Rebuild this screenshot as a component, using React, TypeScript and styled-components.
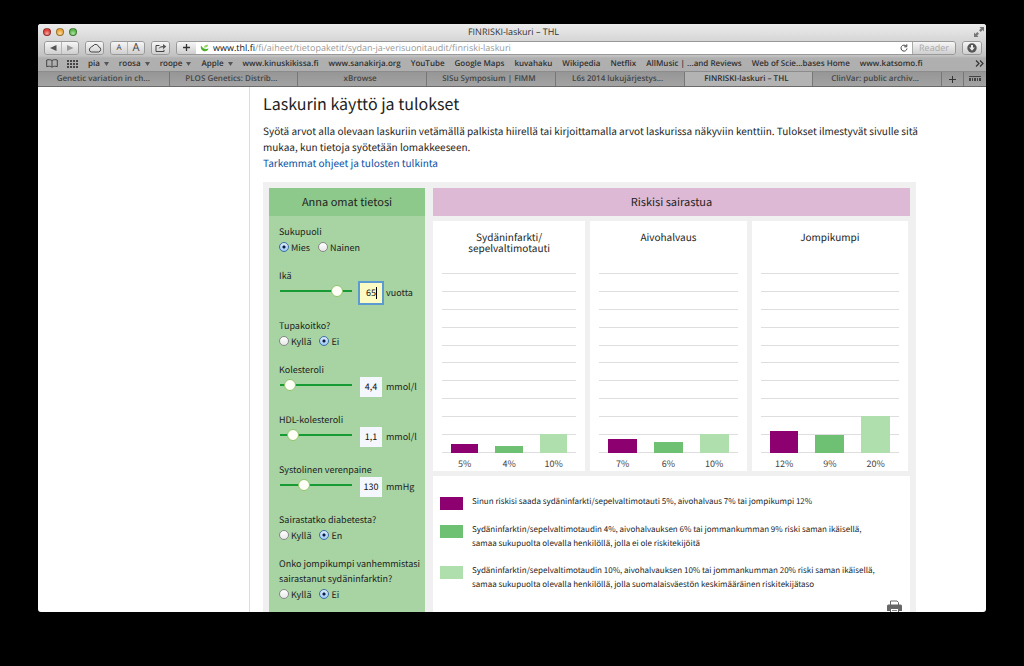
import React, { useState } from "react";
import styled, { createGlobalStyle, css } from "styled-components";

const SITE_FONT = `"Noto Sans CJK SC", "Noto Sans", sans-serif`;
const CHROME_FONT = `"Open Sans", "Noto Sans", sans-serif`;

const GlobalStyle = createGlobalStyle`
  *, *::before, *::after { box-sizing: border-box; }
  html, body { margin: 0; background: #000; text-rendering: geometricPrecision; }
  button, input { font: inherit; color: inherit; margin: 0; text-rendering: inherit; }
`;

const Desktop = styled.div`
  height: 100vh;
  padding: 24px 38px 54px;
  display: flex;
  background: #000;
`;

const Window = styled.div`
  flex: 1;
  min-width: 0;
  display: flex;
  flex-direction: column;
  background: #fff;
  border-radius: 3px;
  overflow: hidden;
`;

/* Browser chrome */

const Chrome = styled.header`
  font-family: ${CHROME_FONT};
  color: #333;
  background: linear-gradient(#ececec, #c2c2c2 32px, #b0b0b0 34px, #adadad);
`;

const TitleBar = styled.div`
  display: grid;
  grid-template-columns: 60px 1fr 60px;
  align-items: center;
  height: 15px;
  padding: 0 2px 0 5px;
`;

const Lights = styled.div`
  display: flex;
  gap: 5px;
`;

const Light = styled.button<{ $color: string }>`
  width: 8px;
  height: 8px;
  padding: 0;
  border: 1px solid rgba(0, 0, 0, 0.35);
  border-radius: 50%;
  background: radial-gradient(circle at 50% 75%, #fff8, transparent 60%), ${(p) => p.$color};
`;

const WindowTitle = styled.div`
  font-size: 9px;
  line-height: 15px;
  text-align: center;
`;

const Expand = styled.svg`
  justify-self: end;
`;

const Toolbar = styled.div`
  display: flex;
  align-items: center;
  gap: 6px;
  height: 17px;
  padding: 0 4px 0 6px;
`;

const ButtonGroup = styled.div`
  display: flex;
  height: 14px;
  border: 1px solid #999;
  border-radius: 3px;
  overflow: hidden;
`;

const ToolButton = styled.button<{ $width?: number; $size?: number }>`
  display: flex;
  align-items: center;
  justify-content: center;
  width: ${(p) => p.$width ?? 17}px;
  padding: 0;
  border: 0;
  background: linear-gradient(#f6f6f6, #cfcfcf);
  font-size: ${(p) => p.$size ?? 9}px;
  line-height: 12px;
  color: #444;
  & + & { border-left: 1px solid #b5b5b5; }
`;

const AddressGroup = styled(ButtonGroup)`
  flex: 1;
  min-width: 0;
`;

const Address = styled.div`
  flex: 1;
  min-width: 0;
  display: flex;
  align-items: center;
  gap: 4px;
  padding: 0 4px;
  background: #fff;
  font-size: 9px;
  line-height: 12px;
  color: #999;
  white-space: nowrap;
  b { font-weight: 400; color: #111; }
`;

const UrlText = styled.span`
  flex: 1;
`;

const ReaderButton = styled(ToolButton)`
  color: #aaa;
  border-left: 1px solid #aaa;
`;

const Bookmarks = styled.nav`
  display: flex;
  align-items: center;
  gap: 10px;
  height: 15px;
  padding: 0 2px 0 8px;
  white-space: nowrap;
`;

const IconPair = styled.div`
  display: flex;
  align-items: center;
  gap: 9px;
`;

const Bookmark = styled.a`
  display: flex;
  align-items: center;
  gap: 4px;
  color: #2f2f2f;
  font-size: 8px;
  line-height: 15px;
  font-weight: 600;
  text-decoration: none;
`;

const More = styled.button`
  display: flex;
  margin-left: auto;
  padding: 0;
  border: 0;
  background: none;
`;

const Tabs = styled.div`
  display: flex;
  height: 16px;
  border-top: 1px solid #8c8c8c;
  border-bottom: 1px solid #6a6a6a;
`;

const tabFace = css<{ $active?: boolean }>`
  padding: 0;
  border: 0;
  border-right: 1px solid #777;
  background: ${(p) => (p.$active ? "#b3b3b3" : "linear-gradient(#969696, #a3a3a3)")};
`;

const Tab = styled.button<{ $active?: boolean }>`
  ${tabFace}
  flex: 128;
  min-width: 0;
  padding-right: 4px;
  font-size: 8px;
  line-height: 14px;
  font-weight: 600;
  color: ${(p) => (p.$active ? "#2d2d2d" : "#444")};
  white-space: nowrap;
  overflow: hidden;
  &:first-child { flex-grow: 135; padding-right: 0; }
`;

const TabTool = styled.button<{ $active?: boolean }>`
  ${tabFace}
  display: flex;
  align-items: center;
  justify-content: center;
  width: 22px;
  &:last-child { border-right: 0; }
`;

/* Page */

const Page = styled.div`
  flex: 1;
  min-height: 0;
  display: grid;
  grid-template-columns: 212px 1fr;
  overflow: hidden;
  font-family: ${SITE_FONT};
  color: #222;
`;

const Sidebar = styled.aside`
  border-right: 1px solid #ddd;
`;

const Main = styled.main`
  min-width: 0;
  padding: 3px 58px 0 13px;
`;

const Heading = styled.h1`
  margin: 0 0 7px;
  font-size: 16px;
  line-height: 26px;
  font-weight: 400;
`;

const Intro = styled.p`
  margin: 0 0 11px;
  font-size: 10px;
  line-height: 16px;
  a { color: #0b4ea2; text-decoration: none; }
`;

const Calculator = styled.section`
  display: grid;
  grid-template-columns: 156px 1fr;
  gap: 8px;
  margin-right: 12px;
  padding: 6px;
  background: #f1f0f1;
`;

const PanelTitle = styled.h2<{ $color: string }>`
  margin: 0;
  background: ${(p) => p.$color};
  font-size: 11px;
  line-height: 28px;
  font-weight: 400;
  text-align: center;
`;

const Form = styled.form`
  background: #a7d4a2;
  font-size: 9px;
  line-height: 15px;
`;

const Fields = styled.div`
  display: flex;
  flex-direction: column;
  gap: 13px;
  padding: 8px 0 24px 10px;
`;

const Group = styled.fieldset`
  margin: 0;
  padding: 0;
  border: 0;
`;

const Legend = styled.legend`
  padding: 0;
  white-space: nowrap;
`;

const FieldLabel = styled.label`
  display: block;
`;

const Options = styled.div`
  display: flex;
  gap: 8px;
  height: 16px;
`;

const Option = styled.label`
  display: flex;
  align-items: center;
  gap: 2px;
`;

const Radio = styled.input.attrs({ type: "radio" })`
  appearance: none;
  width: 10px;
  height: 10px;
  border: 1px solid #888;
  border-radius: 50%;
  background: linear-gradient(#fff, #e8e8e8);
  &:checked {
    border-color: #3f6ea8;
    background: radial-gradient(circle, #0c1c40 0 1px, transparent 2px), linear-gradient(#dcebfb, #9cc8f3);
  }
`;

const SliderRow = styled.div`
  display: flex;
  align-items: flex-start;
  height: 22px;
  padding-left: 1px;
`;

const Slider = styled.input.attrs({ type: "range" })`
  appearance: none;
  width: 72px;
  height: 16px;
  margin-right: 8px;
  background: linear-gradient(#169b35, #169b35) center / 100% 2px no-repeat;
  &::-webkit-slider-thumb {
    appearance: none;
    width: 12px;
    height: 12px;
    border: 1px solid #8fc46a;
    border-radius: 50%;
    background: #fffff8;
  }
`;

const ValueWrap = styled.div`
  position: relative;
  margin-right: 4px;
`;

const ValueBox = styled.input<{ $focused?: boolean }>`
  display: block;
  width: 22px;
  height: 20px;
  padding: 0;
  border: 0;
  outline: 0;
  background: #f4f7fd;
  color: #111;
  line-height: 20px;
  text-align: center;
  ${(p) =>
    p.$focused &&
    css`
      background: #fdfbc4;
      box-shadow: 0 0 0 2px #5c9bd0;
    `}
`;

const Caret = styled.span`
  position: absolute;
  top: 4px;
  right: 5px;
  width: 1px;
  height: 12px;
  background: #000;
`;

const Unit = styled.span`
  line-height: 20px;
`;

const Results = styled.div`
  display: flex;
  flex-direction: column;
  gap: 5px;
  min-width: 0;
`;

const Cards = styled.div`
  display: grid;
  grid-template-columns: 152fr 156fr 156fr;
  gap: 5px;
  padding-right: 2px;
`;

const Card = styled.figure`
  margin: 0;
  padding: 10px 9px 0;
  background: #fff;
`;

const CardTitle = styled.figcaption`
  height: 42px;
  font-size: 10px;
  line-height: 11px;
  text-align: center;
  white-space: pre-line;
`;

const Plot = styled.div`
  display: grid;
  height: 180px;
  & > * { grid-area: 1 / 1; }
`;

const Rules = styled.div`
  display: flex;
  flex-direction: column;
  justify-content: space-between;
`;

const Rule = styled.i`
  height: 1px;
  background: #dedede;
`;

const Bars = styled.div`
  display: grid;
  grid-template-columns: repeat(3, 1fr);
  column-gap: 17px;
  align-items: end;
  padding: 0 9px;
`;

const Bar = styled.div<{ $color: string }>`
  background: ${(p) => p.$color};
`;

const Percents = styled(Bars)`
  padding-top: 4px;
  padding-bottom: 1px;
  font-size: 9px;
  line-height: 13px;
  text-align: center;
  color: #444;
`;

const Explain = styled.div`
  flex: 1;
  display: flex;
  flex-direction: column;
  padding: 19px 8px 20px 7px;
  background: #fff;
`;

const ExplainList = styled.ul`
  display: flex;
  flex-direction: column;
  gap: 13px;
  margin: 0;
  padding: 0;
  list-style: none;
  font-size: 8px;
  line-height: 14px;
  white-space: nowrap;
`;

const ExplainItem = styled.li`
  display: flex;
  align-items: flex-start;
  gap: 9px;
`;

const Swatch = styled.span<{ $color: string }>`
  flex: none;
  width: 23px;
  height: 13px;
  margin-top: 2px;
  background: ${(p) => p.$color};
`;

const PrintButton = styled.button`
  align-self: flex-end;
  display: flex;
  margin-top: 8px;
  padding: 0;
  border: 0;
  background: none;
`;

const COLORS = ["#8d0070", "#6ec072", "#b0dfae"];

const BOOKMARKS: { name: string; menu?: boolean }[] = [
  { name: "pia", menu: true },
  { name: "roosa", menu: true },
  { name: "roope", menu: true },
  { name: "Apple", menu: true },
  { name: "www.kinuskikissa.fi" },
  { name: "www.sanakirja.org" },
  { name: "YouTube" },
  { name: "Google Maps" },
  { name: "kuvahaku" },
  { name: "Wikipedia" },
  { name: "Netflix" },
  { name: "AllMusic | ...and Reviews" },
  { name: "Web of Scie...bases Home" },
  { name: "www.katsomo.fi" },
];

const TABS = [
  "Genetic variation in ch...",
  "PLOS Genetics: Distrib...",
  "xBrowse",
  "SISu Symposium | FIMM",
  "L6s 2014 lukujärjestys...",
  "FINRISKI-laskuri – THL",
  "ClinVar: public archiv...",
];

const CHARTS = [
  { title: "Sydäninfarkti/\nsepelvaltimotauti", values: [5, 4, 10], heights: [9, 7, 19] },
  { title: "Aivohalvaus", values: [7, 6, 10], heights: [14, 11, 19] },
  { title: "Jompikumpi", values: [12, 9, 20], heights: [22, 18, 37] },
];

const EXPLANATIONS = [
  ["Sinun riskisi saada sydäninfarkti/sepelvaltimotauti 5%, aivohalvaus 7% tai jompikumpi 12%"],
  [
    "Sydäninfarktin/sepelvaltimotaudin 4%, aivohalvauksen 6% tai jommankumman 9% riski saman ikäisellä,",
    "samaa sukupuolta olevalla henkilöllä, jolla ei ole riskitekijöitä",
  ],
  [
    "Sydäninfarktin/sepelvaltimotaudin 10%, aivohalvauksen 10% tai jommankumman 20% riski saman ikäisellä,",
    "samaa sukupuolta olevalla henkilöllä, jolla suomalaisväestön keskimääräinen riskitekijätaso",
  ],
];

function RadioGroup({ name, label, options, initial }: { name: string; label: React.ReactNode; options: string[]; initial: string }) {
  const [value, setValue] = useState(initial);
  return (
    <Group>
      <Legend>{label}</Legend>
      <Options>
        {options.map((o) => (
          <Option key={o}>
            <Radio name={name} checked={value === o} onChange={() => setValue(o)} />
            {o}
          </Option>
        ))}
      </Options>
    </Group>
  );
}

interface SliderFieldProps {
  id: string;
  label: string;
  unit: string;
  min: number;
  max: number;
  step: number;
  initial: string;
  focused?: boolean;
}

function SliderField({ id, label, unit, min, max, step, initial, focused }: SliderFieldProps) {
  const [value, setValue] = useState(initial);
  return (
    <div>
      <FieldLabel htmlFor={id}>{label}</FieldLabel>
      <SliderRow>
        <Slider
          aria-label={label}
          min={min}
          max={max}
          step={step}
          value={Number(value.replace(",", ".")) || min}
          onChange={(e) => setValue(e.target.value.replace(".", ","))}
        />
        <ValueWrap>
          <ValueBox id={id} type="text" $focused={focused} value={value} onChange={(e) => setValue(e.target.value)} />
          {focused && <Caret />}
        </ValueWrap>
        <Unit>{unit}</Unit>
      </SliderRow>
    </div>
  );
}

function BrowserChrome() {
  return (
    <Chrome>
      <TitleBar>
        <Lights>
          <Light $color="#e0443c" aria-label="Close" />
          <Light $color="#eca93a" aria-label="Minimize" />
          <Light $color="#5dbb4a" aria-label="Zoom" />
        </Lights>
        <WindowTitle>FINRISKI-laskuri – THL</WindowTitle>
        <Expand width="10" height="10" viewBox="0 0 10 10" fill="#777">
          <path d="M5.500 0H10v4.500L8.600 3.100 6.700 5 5 3.300 6.900 1.400zM4.500 10H0V5.500l1.400 1.400L3.300 5 5 6.700 3.100 8.600z" />
        </Expand>
      </TitleBar>
      <Toolbar>
        <ButtonGroup>
          <ToolButton $width={16} aria-label="Back">
            <svg width="7" height="6" viewBox="0 0 7 6"><path d="M0 3l6.500-3v6z" fill="#555" /></svg>
          </ToolButton>
          <ToolButton aria-label="Forward">
            <svg width="7" height="6" viewBox="0 0 7 6"><path d="M6.500 3L0 0v6z" fill="#999" /></svg>
          </ToolButton>
        </ButtonGroup>
        <ButtonGroup>
          <ToolButton aria-label="iCloud">
            <svg width="14" height="10" viewBox="0 0 14 10" fill="none" stroke="#444">
              <path d="M3.500 9A2.300 2.300 0 0 1 3 4.500 2.200 2.200 0 0 1 5 3 3 3 0 0 1 10.600 3.800 2.700 2.700 0 0 1 10.800 9z" />
            </svg>
          </ToolButton>
        </ButtonGroup>
        <ButtonGroup>
          <ToolButton $width={16} $size={8}>A</ToolButton>
          <ToolButton $size={11}>A</ToolButton>
        </ButtonGroup>
        <ButtonGroup>
          <ToolButton aria-label="Share">
            <svg width="12" height="10" viewBox="0 0 12 10" fill="none" stroke="#444">
              <path d="M4.500 2.500H1v6h8V6.800" />
              <path d="M3.500 6.500C4 4 5.500 3 8 3V1l3.300 2.600L8 6.200V4.300C6 4.100 4.500 5 3.500 6.500z" fill="#555" stroke="none" />
            </svg>
          </ToolButton>
        </ButtonGroup>
        <AddressGroup>
          <ToolButton $width={19} aria-label="Add bookmark">
            <svg width="7" height="7" viewBox="0 0 7 7" stroke="#333" strokeWidth="1.300"><path d="M3.500 0v7M0 3.500h7" /></svg>
          </ToolButton>
          <Address>
            <svg width="9" height="8" viewBox="0 0 9 8">
              <path d="M1 1.500C0 5 2.500 7.500 5 7.300 7 7.200 8.200 6 8.500 4.500 6 5.500 3 5 1 1.500z" fill="#4fae2c" />
              <path d="M4 3.500C4 1.500 6 .5 8 .8 8 2.500 7 4 4 3.500z" fill="#8fd35b" />
            </svg>
            <UrlText>
              <b>www.thl.fi</b>/fi/aiheet/tietopaketit/sydan-ja-verisuonitaudit/finriski-laskuri
            </UrlText>
            <svg width="8" height="8" viewBox="0 0 8 8" fill="none" stroke="#444">
              <path d="M6.300 2.200A3 3 0 1 0 7 4.500" /><path d="M6.800.3v2.500H4.300" />
            </svg>
          </Address>
          <ReaderButton $width={43}>Reader</ReaderButton>
        </AddressGroup>
        <ButtonGroup>
          <ToolButton $width={18} aria-label="Downloads">
            <svg width="10" height="10" viewBox="0 0 10 10">
              <circle cx="5" cy="5" r="4.700" fill="#555" /><path d="M4 2h2v2.500h1.800L5 7.800 2.200 4.500H4z" fill="#eee" />
            </svg>
          </ToolButton>
        </ButtonGroup>
      </Toolbar>
      <Bookmarks>
        <IconPair>
          <svg width="12" height="9" viewBox="0 0 12 9" fill="none" stroke="#444">
            <path d="M6 1.500C4.500.5 2.500.5.7 1v6.700C2.500 7 4.500 7 6 8.200 7.500 7 9.500 7 11.300 7.700V1C9.500.5 7.500.5 6 1.500zM6 1.500v6.500" />
          </svg>
          <svg width="11" height="8" viewBox="0 0 11 8" fill="#444">
            {[0, 3, 6].flatMap((y) => [0, 3, 6, 9].map((x) => <rect key={`${x}-${y}`} x={x} y={y} width="2" height="2" />))}
          </svg>
        </IconPair>
        {BOOKMARKS.map((b) => (
          <Bookmark key={b.name} href="#">
            {b.name}
            {b.menu && (
              <svg width="5" height="4" viewBox="0 0 5 4"><path d="M0 0h5L2.500 4z" fill="#555" /></svg>
            )}
          </Bookmark>
        ))}
        <More aria-label="More bookmarks">
          <svg width="9" height="7" viewBox="0 0 9 7" fill="none" stroke="#333" strokeWidth="1.200">
            <path d="M1 .5l3 3-3 3M5 .5l3 3-3 3" />
          </svg>
        </More>
      </Bookmarks>
      <Tabs>
        {TABS.map((t, i) => (
          <Tab key={t} $active={i === 5}>{t}</Tab>
        ))}
        <TabTool aria-label="New tab">
          <svg width="7" height="7" viewBox="0 0 7 7" stroke="#333"><path d="M3.500 0v7M0 3.500h7" /></svg>
        </TabTool>
        <TabTool aria-label="Show all tabs">
          <svg width="12" height="6" viewBox="0 0 12 6" fill="#444">
            <path d="M0 0h12v1H0zM0 2h2v3H0zM3 2h1v3H3zM5 2h2v3H5zM8 2h1v3H8zM10 2h2v3h-2z" />
          </svg>
        </TabTool>
      </Tabs>
    </Chrome>
  );
}

export default function App() {
  return (
    <Desktop>
      <GlobalStyle />
      <Window>
        <BrowserChrome />
        <Page lang="fi">
          <Sidebar />
          <Main>
            <Heading>Laskurin käyttö ja tulokset</Heading>
            <Intro>
              Syötä arvot alla olevaan laskuriin vetämällä palkista hiirellä tai kirjoittamalla arvot laskurissa näkyviin
              kenttiin. Tulokset ilmestyvät sivulle sitä mukaa, kun tietoja syötetään lomakkeeseen.
              <br />
              <a href="#">Tarkemmat ohjeet ja tulosten tulkinta</a>
            </Intro>
            <Calculator>
              <Form>
                <PanelTitle $color="#8cc98b">Anna omat tietosi</PanelTitle>
                <Fields>
                  <RadioGroup name="sex" label="Sukupuoli" options={["Mies", "Nainen"]} initial="Mies" />
                  <SliderField id="age" label="Ikä" unit="vuotta" min={24} max={72} step={1} initial="65" focused />
                  <RadioGroup name="smoking" label="Tupakoitko?" options={["Kyllä", "Ei"]} initial="Ei" />
                  <SliderField id="chol" label="Kolesteroli" unit="mmol/l" min={4} max={10} step={0.1} initial="4,4" />
                  <SliderField id="hdl" label="HDL-kolesteroli" unit="mmol/l" min={0.8} max={3.3} step={0.1} initial="1,1" />
                  <SliderField id="bp" label="Systolinen verenpaine" unit="mmHg" min={100} max={200} step={1} initial="130" />
                  <RadioGroup name="diabetes" label="Sairastatko diabetesta?" options={["Kyllä", "En"]} initial="En" />
                  <RadioGroup
                    name="parents"
                    label={<>Onko jompikumpi vanhemmistasi<br />sairastanut sydäninfarktin?</>}
                    options={["Kyllä", "Ei"]}
                    initial="Ei"
                  />
                </Fields>
              </Form>
              <Results>
                <PanelTitle $color="#deb9d5">Riskisi sairastua</PanelTitle>
                <Cards>
                  {CHARTS.map((c) => (
                    <Card key={c.title}>
                      <CardTitle>{c.title}</CardTitle>
                      <Plot>
                        <Rules>
                          {Array.from({ length: 11 }, (_, i) => <Rule key={i} />)}
                        </Rules>
                        <Bars>
                          {c.heights.map((h, i) => (
                            <Bar key={i} $color={COLORS[i]} style={{ height: h }} />
                          ))}
                        </Bars>
                      </Plot>
                      <Percents>
                        {c.values.map((v, i) => <span key={i}>{v}%</span>)}
                      </Percents>
                    </Card>
                  ))}
                </Cards>
                <Explain>
                  <ExplainList>
                    {EXPLANATIONS.map((lines, i) => (
                      <ExplainItem key={i}>
                        <Swatch $color={COLORS[i]} />
                        <span>
                          {lines[0]}
                          {lines[1] && <><br />{lines[1]}</>}
                        </span>
                      </ExplainItem>
                    ))}
                  </ExplainList>
                  <PrintButton aria-label="Tulosta">
                    <svg width="15" height="14" viewBox="0 0 15 14">
                      <path d="M3.500 5V1h6.500l1.500 1.500V5" fill="#fff" stroke="#666" />
                      <path d="M1.500 4.500h12A1.500 1.500 0 0 1 15 6v5H0V6a1.500 1.500 0 0 1 1.500-1.500z" fill="#666" />
                      <path d="M3.500 8.500h8v5h-8z" fill="#fff" stroke="#666" />
                      <path d="M5 10.500h5" stroke="#888" />
                    </svg>
                  </PrintButton>
                </Explain>
              </Results>
            </Calculator>
          </Main>
        </Page>
      </Window>
    </Desktop>
  );
}
